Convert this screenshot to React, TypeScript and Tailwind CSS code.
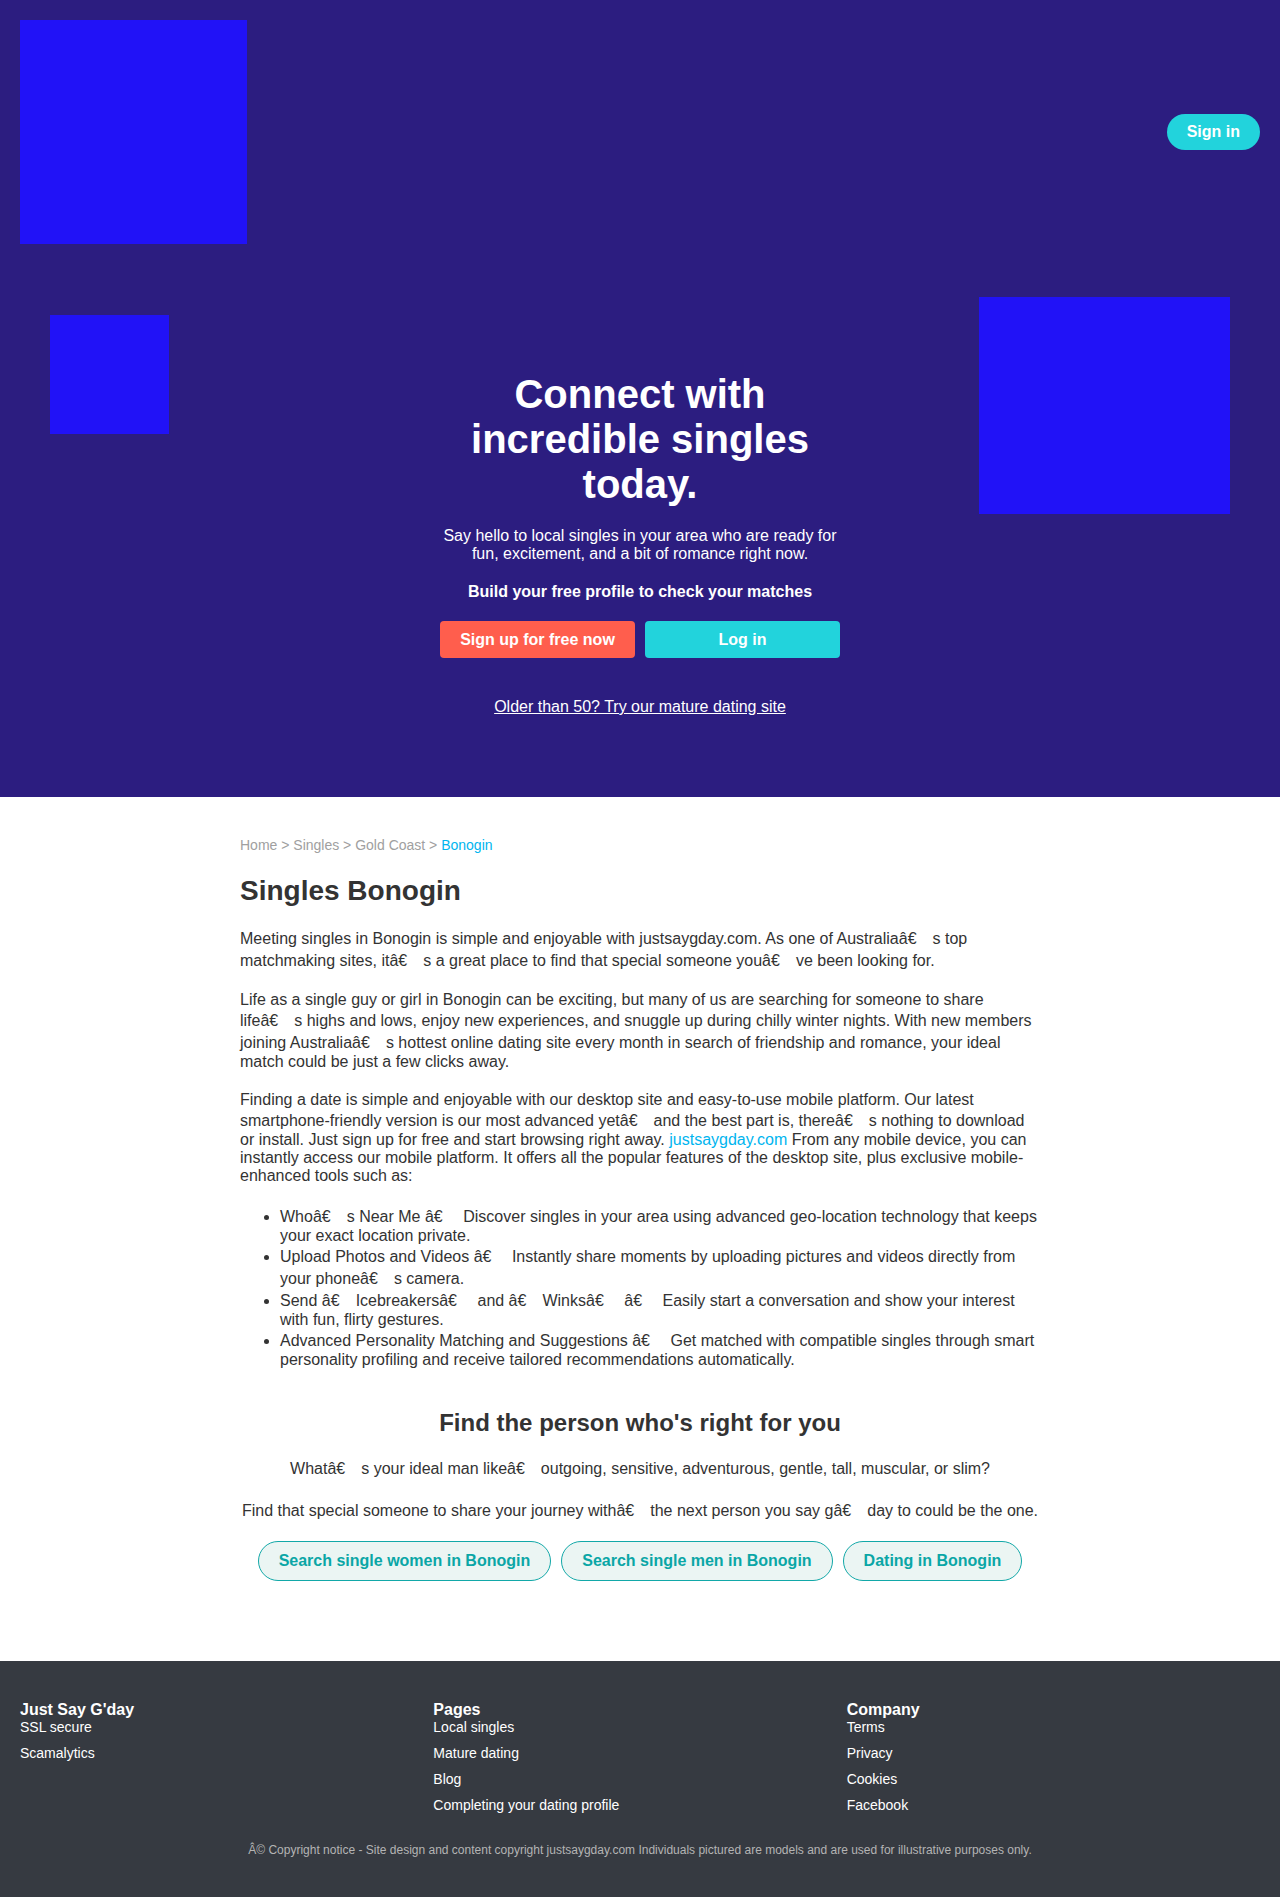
import React from 'react';

// "¤" in the copy marks the broken-encoding gap that follows every "â€"
const Mojibake: React.FC<{ text: string }> = ({ text }) => {
  const parts = text.split('¤');
  return (
    <>
      {parts.map((p, i) => (
        <React.Fragment key={i}>
          {p}
          {i < parts.length - 1 && (
            <span className="font-['Noto_Sans']">{'\u2060\u2003\u2060'}</span>
          )}
        </React.Fragment>
      ))}
    </>
  );
};

const FEATURES = [
  'Whoâ€¤s Near Me â€¤ Discover singles in your area using advanced geo-location technology that keeps your exact location private.',
  'Upload Photos and Videos â€¤ Instantly share moments by uploading pictures and videos directly from your phoneâ€¤s camera.',
  'Send â€¤Icebreakersâ€¤ and â€¤Winksâ€¤ â€¤ Easily start a conversation and show your interest with fun, flirty gestures.',
  'Advanced Personality Matching and Suggestions â€¤ Get matched with compatible singles through smart personality profiling and receive tailored recommendations automatically.',
];

const FOOTER_COLS = [
  { title: "Just Say G'day", links: ['SSL secure', 'Scamalytics'] },
  { title: 'Pages', links: ['Local singles', 'Mature dating', 'Blog', 'Completing your dating profile'] },
  { title: 'Company', links: ['Terms', 'Privacy', 'Cookies', 'Facebook'] },
];

const SEARCH_LINKS = ['Search single women in Bonogin', 'Search single men in Bonogin', 'Dating in Bonogin'];

export default function App() {
  return (
    <div className="font-['Liberation_Sans',Arial,sans-serif] leading-[normal] bg-white">
      {/* Hero */}
      <section className="relative bg-[#2c1d80] pb-[81px] overflow-hidden">
        {/* floating photo placeholders */}
        <div className="absolute left-[50px] top-[315px] w-[119px] h-[119px] bg-[#2112f7]" />
        <div className="absolute right-[50px] top-[297px] w-[251px] h-[217px] bg-[#2112f7]" />

        <header className="relative flex items-center justify-between px-5 pt-5">
          <div className="w-[227px] h-[224px] bg-[#2112f7]" />
          <a className="bg-[#22d3dc] text-white font-bold text-[16px] px-5 py-[9px] rounded-full">Sign in</a>
        </header>

        <div className="relative mx-auto w-[400px] pt-[128px] text-center text-white">
          <h1 className="text-[40px] leading-[45px] font-bold mb-5">Connect with incredible singles today.</h1>
          <p className="text-[16px] mb-5">
            Say hello to local singles in your area who are ready for fun, excitement, and a bit of romance right now.
          </p>
          <p className="text-[16px] font-bold mb-5">Build your free profile to check your matches</p>
          <div className="flex gap-[10px]">
            <a className="w-[195px] h-[37px] flex items-center justify-center rounded-[4px] bg-[#ff5e4d] text-white font-bold text-[16px]">
              Sign up for free now
            </a>
            <a className="w-[195px] h-[37px] flex items-center justify-center rounded-[4px] bg-[#22d3dc] text-white font-bold text-[16px]">
              Log in
            </a>
          </div>
          <a className="inline-block mt-10 text-[16px] underline">Older than 50? Try our mature dating site</a>
        </div>
      </section>

      {/* Content */}
      <main className="w-[800px] mx-auto pt-10 pb-20 text-[16px] text-[#333]">
        <nav className="text-[14px] text-[#a0a0a0] mb-[22px]">
          Home &gt; Singles &gt; Gold Coast &gt; <span className="text-[#00b5ef]">Bonogin</span>
        </nav>
        <h1 className="text-[28px] font-bold mb-5">Singles Bonogin</h1>
        <p className="mb-5">
          <Mojibake text="Meeting singles in Bonogin is simple and enjoyable with justsaygday.com. As one of Australiaâ€¤s top matchmaking sites, itâ€¤s a great place to find that special someone youâ€¤ve been looking for." />
        </p>
        <p className="mb-5">
          <Mojibake text="Life as a single guy or girl in Bonogin can be exciting, but many of us are searching for someone to share lifeâ€¤s highs and lows, enjoy new experiences, and snuggle up during chilly winter nights. With new members joining Australiaâ€¤s hottest online dating site every month in search of friendship and romance, your ideal match could be just a few clicks away." />
        </p>
        <p className="mb-5">
          <Mojibake text="Finding a date is simple and enjoyable with our desktop site and easy-to-use mobile platform. Our latest smartphone-friendly version is our most advanced yetâ€¤and the best part is, thereâ€¤s nothing to download or install. Just sign up for free and start browsing right away. " />
          <a className="text-[#00b5ef]">justsaygday.com</a> From any mobile device, you can instantly access our mobile
          platform. It offers all the popular features of the desktop site, plus exclusive mobile-enhanced tools such as:
        </p>
        <ul className="list-disc pl-10">
          {FEATURES.map((f) => (
            <li key={f}>
              <Mojibake text={f} />
            </li>
          ))}
        </ul>

        <section className="mt-10 text-center">
          <h2 className="text-[24px] font-bold mb-5">Find the person who's right for you</h2>
          <p className="mb-5">
            <Mojibake text="Whatâ€¤s your ideal man likeâ€¤outgoing, sensitive, adventurous, gentle, tall, muscular, or slim?" />
          </p>
          <p className="mb-5">
            <Mojibake text="Find that special someone to share your journey withâ€¤the next person you say gâ€¤day to could be the one." />
          </p>
          <div className="flex justify-center gap-[10px]">
            {SEARCH_LINKS.map((s) => (
              <a
                key={s}
                className="px-5 py-[10px] rounded-full border border-[#12a8a8] bg-[#ebf5f3] text-[#0aa6a6] font-bold text-[16px]"
              >
                {s}
              </a>
            ))}
          </div>
        </section>
      </main>

      {/* Footer */}
      <footer className="bg-[#363a41] text-white px-5 pt-10 pb-10">
        <div className="grid grid-cols-3">
          {FOOTER_COLS.map((col) => (
            <div key={col.title}>
              <h4 className="text-[16px] font-bold">{col.title}</h4>
              <ul className="flex flex-col gap-[10px]">
                {col.links.map((l) => (
                  <li key={l} className="text-[14px] leading-[16px]">
                    {l}
                  </li>
                ))}
              </ul>
            </div>
          ))}
        </div>
        <p className="mt-[30px] text-center text-[12px] text-[#b4b4b4]">
          Â© Copyright notice - Site design and content copyright justsaygday.com Individuals pictured are models and are
          used for illustrative purposes only.
        </p>
      </footer>
    </div>
  );
}
